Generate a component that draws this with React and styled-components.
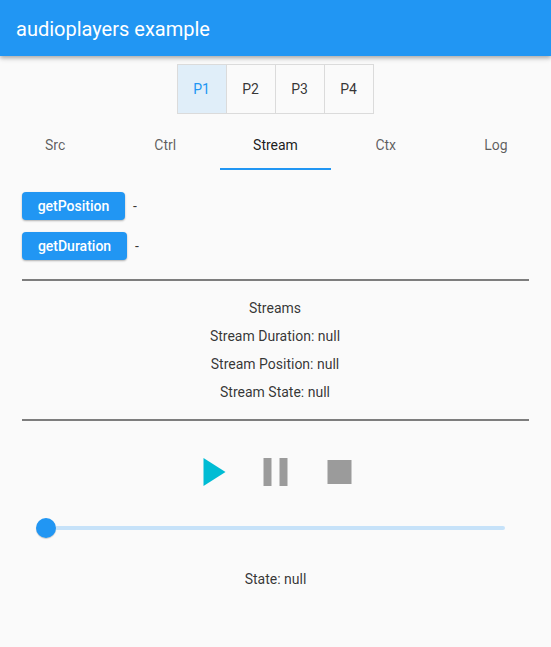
import React from "react";
import styled, { createGlobalStyle } from "styled-components";

const GlobalStyle = createGlobalStyle`
  * { box-sizing: border-box; }
  body { margin: 0; background: #fafafa; font-family: Roboto, sans-serif; font-size: 14px; color: rgba(0,0,0,.8); }
`;
const Page = styled.main`
  height: 647px;
  display: flex;
  flex-direction: column;
  overflow: hidden;
`;
const AppBar = styled.header`
  flex: none;
  height: 56px;
  padding: 2px 16px 0;
  display: flex;
  align-items: center;
  background: #2196f3;
  color: #fff;
  font-size: 20px;
  font-weight: 400;
  box-shadow: 0 2px 4px rgba(0,0,0,.28), 0 2px 7px rgba(0,0,0,.08);
`;
const PlayerToggle = styled.div`
  display: flex;
  align-self: center;
  margin-top: 8px;
  height: 50px;
  border: 1px solid #dbdbdb;
`;
const PlayerButton = styled.button`
  width: ${(p) => (p.$last ? 48 : 49)}px;
  padding: 0 1px 0 0;
  border: 0;
  border-right: ${(p) => (p.$last ? "0" : "1px solid #dbdbdb")};
  background: ${(p) => (p.$active ? "#e0eef9" : "transparent")};
  color: ${(p) => (p.$active ? "#2196f3" : "rgba(0,0,0,.8)")};
  font: 400 14px Roboto, sans-serif;
`;
const Tabs = styled.nav`
  display: grid;
  grid-template-columns: repeat(5, 1fr);
  height: 48px;
  margin-top: 8px;
`;
const Tab = styled.a`
  display: flex;
  align-items: center;
  justify-content: center;
  border-bottom: 2px solid ${(p) => (p.$active ? "#2196f3" : "transparent")};
  color: ${(p) => (p.$active ? "rgba(0,0,0,.9)" : "rgba(0,0,0,.64)")};
`;
const Content = styled.section`
  display: flex;
  flex-direction: column;
  padding: 22px 22px 0;
`;
const Queries = styled.div`
  display: flex;
  flex-direction: column;
  gap: 12px;
  margin-bottom: 19px;
`;
const QueryRow = styled.div`
  display: flex;
  align-items: center;
  gap: 8px;
  height: 28px;
`;
const QueryButton = styled.button`
  width: ${(p) => p.$width}px;
  height: 28px;
  padding: 0;
  border: 0;
  border-radius: 4px;
  background: #2196f3;
  color: #fff;
  font: 500 14px Roboto, sans-serif;
  box-shadow: 0 1px 2px rgba(0,0,0,.3);
`;
const Divider = styled.hr`
  width: 100%;
  height: 2px;
  margin: 0;
  border: 0;
  background: #7d7d7d;
`;
const StreamInfo = styled.div`
  display: flex;
  flex-direction: column;
  align-items: center;
  height: 138px;
  padding: 13px 1px 0 0;
  line-height: 28px;
`;
const Info = styled.div`
  height: 28px;
`;
const Controls = styled.div`
  display: flex;
  justify-content: center;
  gap: 16px;
  margin-top: 27px;
`;
const Icon = styled.svg`
  width: 48px;
  height: 48px;
  fill: ${(p) => p.$color};
`;
const Slider = styled.div`
  display: flex;
  align-items: center;
  height: 20px;
  margin: 22px 24px 0 14px;
`;
const Thumb = styled.div`
  width: 20px;
  height: 20px;
  border-radius: 50%;
  background: #2196f3;
  box-shadow: 0 1px 1px rgba(0,0,0,.18);
`;
const Track = styled.div`
  flex: 1;
  height: 4px;
  border-radius: 0 2px 2px 0;
  background: #c6e2f9;
`;
const State = styled.div`
  margin-top: 33px;
  text-align: center;
  line-height: 16px;
`;

export default function App() {
  return (
    <Page>
      <GlobalStyle />
      <AppBar>audioplayers example</AppBar>
      <PlayerToggle>
        {["P1", "P2", "P3", "P4"].map((p, i) => (
          <PlayerButton key={p} $active={i === 0} $last={i === 3}>{p}</PlayerButton>
        ))}
      </PlayerToggle>
      <Tabs>
        {["Src", "Ctrl", "Stream", "Ctx", "Log"].map((t) => (
          <Tab key={t} $active={t === "Stream"}>{t}</Tab>
        ))}
      </Tabs>
      <Content>
        <Queries>
          <QueryRow><QueryButton $width={103}>getPosition</QueryButton>-</QueryRow>
          <QueryRow><QueryButton $width={105}>getDuration</QueryButton>-</QueryRow>
        </Queries>
        <Divider />
        <StreamInfo>
          <Info>Streams</Info>
          <Info>Stream Duration: null</Info>
          <Info>Stream Position: null</Info>
          <Info>Stream State: null</Info>
        </StreamInfo>
        <Divider />
        <Controls>
          <Icon viewBox="0.25 0 24 24" $color="#00bcd4"><path d="M8 5v14l11-7z" /></Icon>
          <Icon viewBox="0.25 0 24 24" $color="#9b9b9b"><path d="M6 19h4V5H6v14zm8-14v14h4V5h-4z" /></Icon>
          <Icon viewBox="0.25 0 24 24" $color="#9b9b9b"><path d="M6 6h12v12H6z" /></Icon>
        </Controls>
        <Slider><Thumb /><Track /></Slider>
        <State>State: null</State>
      </Content>
    </Page>
  );
}
